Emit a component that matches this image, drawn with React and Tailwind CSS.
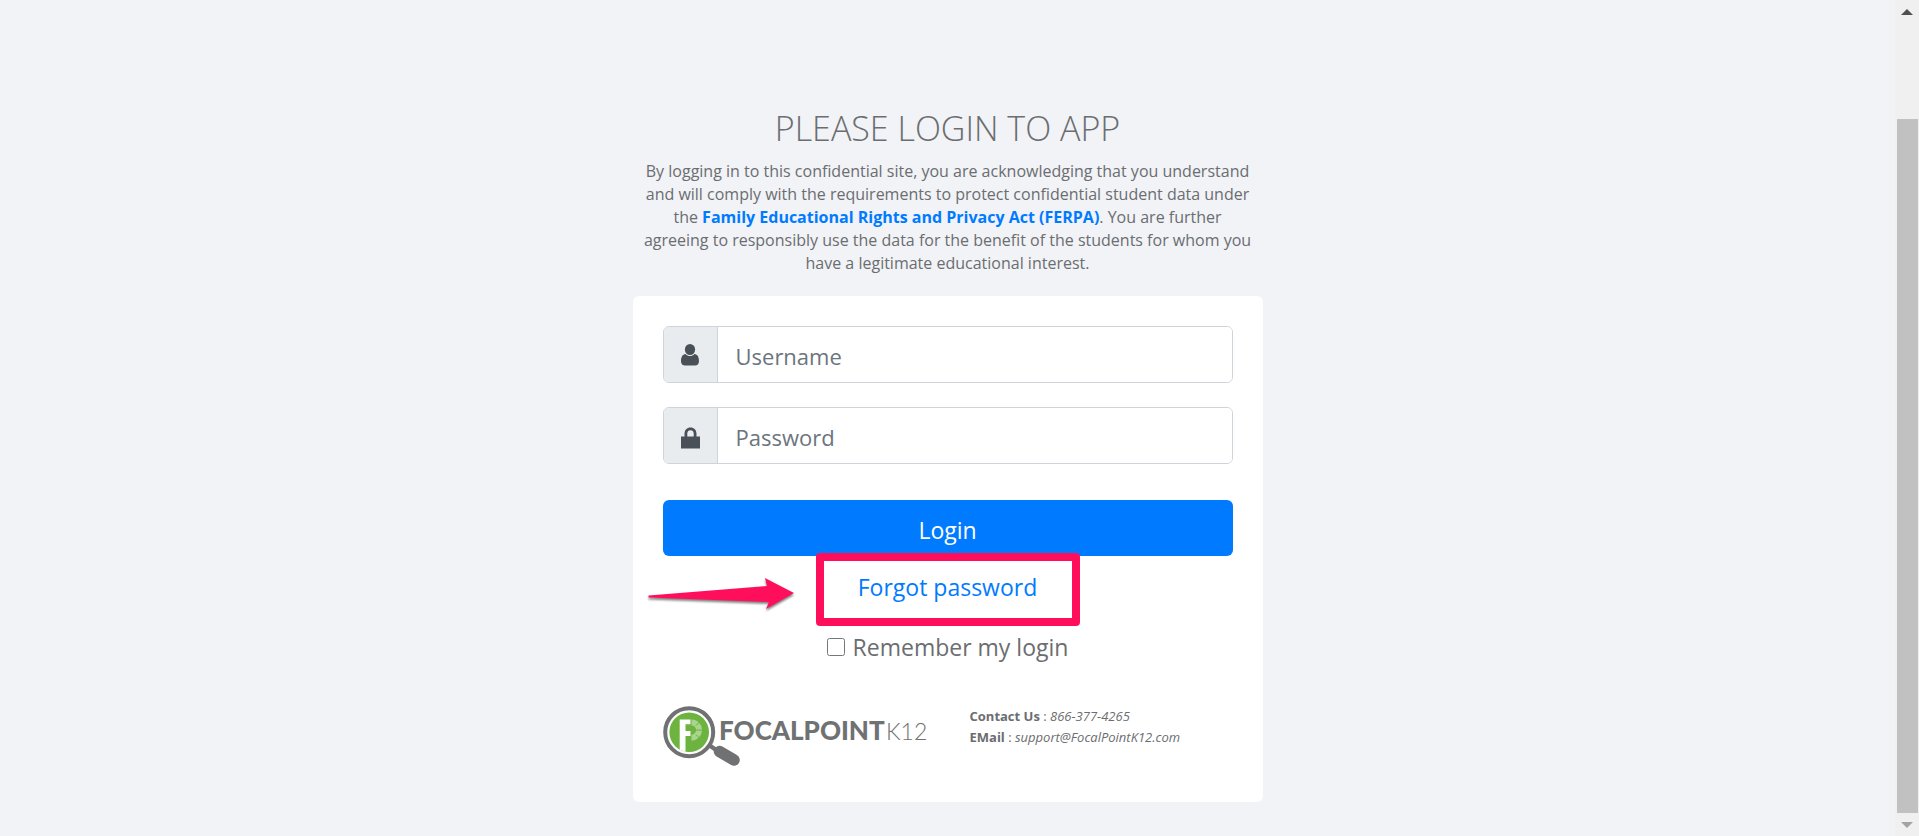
import React, { useState } from 'react';

const UserIcon = () => (
  <svg viewBox="0 0 18 22" className="mt-px h-[22px] w-[18px]" fill="#495057" aria-hidden="true">
    <ellipse cx="9" cy="5.5" rx="5.1" ry="5.5" />
    <path d="M4.6 9.9C1.5 10.200 0 12.8 0 17.2 0 20 1.7 21.6 4 21.600h10c2.300 0 4-1.600 4-4.400 0-4.400-1.500-7-4.600-7.300C12.200 11.300 10.700 12 9 12S5.800 11.300 4.600 9.900Z" />
  </svg>
);

const LockIcon = () => (
  <svg viewBox="0 0 19 22" className="mt-1 h-[22px] w-[19px]" fill="#495057" aria-hidden="true">
    <path fillRule="evenodd" d="M0 9.500h3.500V6.700C3.500 2.800 6 .4 9.500.4s6 2.400 6 6.300v2.800H19V21.500H0Zm6.300 0h6.400V6.500c0-2.100-1.300-3.300-3.200-3.300S6.300 4.400 6.300 6.500Z" />
  </svg>
);

const Logo = () => (
  <svg viewBox="0 0 266 60" className="h-[60px] w-[266px] shrink-0" role="img" aria-label="FocalPoint K12">
    <path d="M46 39 56 46" stroke="#707173" strokeWidth="4.500" />
    <path d="M56.500 45.500 71 54" stroke="#707173" strokeWidth="11.500" strokeLinecap="round" />
    <circle cx="26.200" cy="26.200" r="24" fill="#fff" stroke="#707173" strokeWidth="4" />
    <circle cx="26.200" cy="26.200" r="19.800" fill="#6cb33f" />
    <path d="M16.700 13.500H27.500v4.800h-5v6.700h5v5h-5v16l-5.800-2.300Z" fill="#fff" />
    <path d="M28.500 16.500a7.600 7.600 0 0 1 0 15.200" fill="none" stroke="#a9d48c" strokeWidth="6" />
    <path d="M33 19.500 38 14.500M31 24.100h9M33 28.700 38 33.700" stroke="#6cb33f" strokeWidth="1" />
    <text x="56" y="34" fontFamily="Lato, sans-serif" fontWeight="900" fontSize="26" fill="#707173">FOCALPOINT</text>
    <text x="223" y="34" fontFamily="Lato, sans-serif" fontWeight="300" fontSize="23" fill="#707173">K12</text>
  </svg>
);

const Field = ({ id, type, label, icon, value, onChange }) => (
  <div className="flex h-[57px] overflow-hidden rounded-md border border-[#ced4da]">
    <label htmlFor={id} className="flex w-[54px] shrink-0 items-center justify-center border-r border-[#ced4da] bg-[#e9ecef]">
      {icon}
    </label>
    <input
      id={id}
      type={type}
      aria-label={label}
      placeholder={label}
      value={value}
      onChange={onChange}
      className="min-w-0 flex-1 bg-white px-[18px] pt-1 text-[22px] text-[#495057] placeholder:text-[#6c757d] focus:outline-none"
    />
  </div>
);

const Scrollbar = () => (
  <div className="flex w-6 shrink-0 flex-col items-center bg-[#f0f0f0]" aria-hidden="true">
    <svg viewBox="0 0 12 6" className="mt-[9px] h-[6px] w-[12px]" fill="#505050">
      <path d="M6 0 12 6H0Z" />
    </svg>
    <div className="mt-[104px] w-[21px] flex-1 bg-[#c1c1c1]" />
    <svg viewBox="0 0 12 6" className="mt-[9px] mb-[8px] h-[6px] w-[12px]" fill="#a3a3a3">
      <path d="M0 0h12L6 6Z" />
    </svg>
  </div>
);

const App = () => {
  const [username, setUsername] = useState('');
  const [password, setPassword] = useState('');
  const [remember, setRemember] = useState(false);

  return (
    <div className="flex min-h-screen bg-[#f1f3f7] font-['Open_Sans',sans-serif] text-[#6b6d70]">
      <main className="flex flex-1 flex-col items-center pt-[106px]">
        <header className="w-full max-w-[630px] text-center">
          <h1 className="text-[34px] leading-[44px] font-light">PLEASE LOGIN TO APP</h1>
          <p className="mt-[10px] text-base leading-[23px]">
            By logging in to this confidential site, you are acknowledging that you understand
            <br />
            and will comply with the requirements to protect confidential student data under
            <br />
            the{' '}
            <a href="#ferpa" className="font-bold text-[#007bff]">
              Family Educational Rights and Privacy Act (FERPA)
            </a>
            . You are further
            <br />
            agreeing to responsibly use the data for the benefit of the students for whom you
            <br />
            have a legitimate educational interest.
          </p>
        </header>

        <form
          className="mt-[21px] flex w-full max-w-[630px] flex-col rounded-md bg-white p-[30px] pb-9"
          onSubmit={(e) => e.preventDefault()}
        >
          <Field id="username" type="text" label="Username" icon={<UserIcon />} value={username} onChange={(e) => setUsername(e.target.value)} />
          <div className="mt-6">
            <Field id="password" type="password" label="Password" icon={<LockIcon />} value={password} onChange={(e) => setPassword(e.target.value)} />
          </div>

          <button type="submit" className="mt-9 h-14 rounded-md bg-[#007bff] pt-1 text-[23px] text-white">
            Login
          </button>

          <div className="relative mt-[5px] flex h-[57px] items-center justify-center">
            <svg viewBox="0 0 150 38" className="absolute top-4 left-[-16px] h-[38px] w-[150px]" aria-hidden="true">
              <path d="M1.500 18.500 120 9 118 1 147 16 119 32 122 25 1.500 20.500Z" fill="#ff0f5b" className="drop-shadow-[0_2px_1px_rgba(0,0,0,0.5)]" />
            </svg>
            <a href="#forgot" className="pb-1 text-[23px] text-[#007bff]">
              Forgot password
            </a>
            <span className="pointer-events-none absolute -top-2 left-1/2 h-[73px] w-[264px] -translate-x-1/2 rounded border-8 border-[#ff0f5b]" />
          </div>

          <label className="mt-[11px] flex h-9 items-center justify-center gap-2 text-[23px]">
            <input type="checkbox" checked={remember} onChange={(e) => setRemember(e.target.checked)} className="h-[18px] w-[18px]" />
            Remember my login
          </label>

          <footer className="mt-[41px] flex">
            <Logo />
            <div className="ml-[41px] text-[13px] leading-[21px]">
              <p>
                <strong>Contact Us</strong> : <em>866-377-4265</em>
              </p>
              <p>
                <strong>EMail</strong> : <em>support@FocalPointK12.com</em>
              </p>
            </div>
          </footer>
        </form>
      </main>
      <Scrollbar />
    </div>
  );
};

export default App;
